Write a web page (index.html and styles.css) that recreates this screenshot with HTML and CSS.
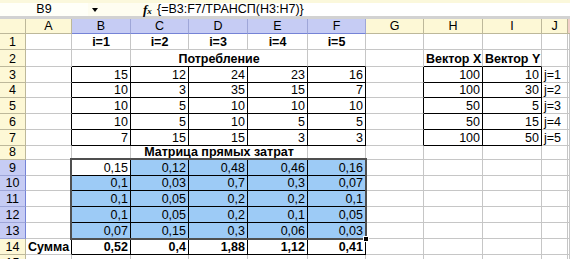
FILE: index.html
```html
<!DOCTYPE html>
<html lang="ru">

<head>
  <meta charset="UTF-8" />
  <title>Матрица прямых затрат</title>
  <link rel="stylesheet" href="styles.css">
</head>

<body>
  <div class="formula-bar">
    <div class="name-box">B9</div>
    <div class="name-arrow"><span></span></div>
    <div class="fx">f<span>x</span></div>
    <div class="formula">{=B3:F7/ТРАНСП(H3:H7)}</div>
  </div>
  <div class="sheet">
    <table class="grid">
      <colgroup>
        <col style="width:26px">
        <col style="width:46px">
        <col style="width:59px">
        <col style="width:58px">
        <col style="width:59px">
        <col style="width:60px">
        <col style="width:58px">
        <col style="width:58px">
        <col style="width:59px">
        <col style="width:59px">
        <col style="width:26px">
        <col style="width:2px">
      </colgroup>
      <thead>
        <tr class="hdr">
          <th class="corner"></th>
          <th>A</th>
          <th class="sel">B</th>
          <th class="sel">C</th>
          <th class="sel">D</th>
          <th class="sel">E</th>
          <th class="sel">F</th>
          <th>G</th>
          <th>H</th>
          <th>I</th>
          <th>J</th>
          <th class="edge"></th>
        </tr>
      </thead>
      <tbody>
        <tr class="h16">
          <td class="rh">1</td>
          <td></td>
          <td class="c b">i=1</td>
          <td class="c b">i=2</td>
          <td class="c b">i=3</td>
          <td class="c b">i=4</td>
          <td class="c b">i=5</td>
          <td></td><td></td><td></td><td></td><td></td>
        </tr>
        <tr class="h17">
          <td class="rh">2</td>
          <td></td>
          <td class="kb"></td>
          <td class="kb c b" colspan="3">Потребление</td>
          <td class="kb"></td>
          <td></td>
          <td class="kb c b">Вектор X</td>
          <td class="kb c b">Вектор Y</td>
          <td></td><td></td>
        </tr>
        <tr class="h16">
          <td class="rh">3</td>
          <td class="kr"></td>
          <td class="k n">15</td><td class="k n">12</td><td class="k n">24</td><td class="k n">23</td><td class="k n">16</td>
          <td class="kr"></td>
          <td class="k n">100</td><td class="k n">10</td>
          <td>j=1</td><td></td>
        </tr>
        <tr class="h15">
          <td class="rh">4</td>
          <td class="kr"></td>
          <td class="k n">10</td><td class="k n">3</td><td class="k n">35</td><td class="k n">15</td><td class="k n">7</td>
          <td class="kr"></td>
          <td class="k n">100</td><td class="k n">30</td>
          <td>j=2</td><td></td>
        </tr>
        <tr class="h16">
          <td class="rh">5</td>
          <td class="kr"></td>
          <td class="k n">10</td><td class="k n">5</td><td class="k n">10</td><td class="k n">10</td><td class="k n">10</td>
          <td class="kr"></td>
          <td class="k n">50</td><td class="k n">5</td>
          <td>j=3</td><td></td>
        </tr>
        <tr class="h16">
          <td class="rh">6</td>
          <td class="kr"></td>
          <td class="k n">10</td><td class="k n">5</td><td class="k n">10</td><td class="k n">5</td><td class="k n">5</td>
          <td class="kr"></td>
          <td class="k n">50</td><td class="k n">15</td>
          <td>j=4</td><td></td>
        </tr>
        <tr class="h16">
          <td class="rh">7</td>
          <td class="kr"></td>
          <td class="k n">7</td><td class="k n">15</td><td class="k n">15</td><td class="k n">3</td><td class="k n">3</td>
          <td class="kr"></td>
          <td class="k n">100</td><td class="k n">50</td>
          <td>j=5</td><td></td>
        </tr>
        <tr class="h14">
          <td class="rh">8</td>
          <td></td>
          <td class="kb"></td>
          <td class="kb c b" colspan="3">Матрица прямых затрат</td>
          <td class="kb"></td>
          <td></td><td></td><td></td><td></td><td></td>
        </tr>
        <tr class="h16">
          <td class="rh sel">9</td>
          <td class="kr"></td>
          <td class="k n">0,15</td><td class="k n blue">0,12</td><td class="k n blue">0,48</td><td class="k n blue">0,46</td><td class="k n blue">0,16</td>
          <td></td><td></td><td></td><td></td><td></td>
        </tr>
        <tr class="h15">
          <td class="rh sel">10</td>
          <td class="kr"></td>
          <td class="k n blue">0,1</td><td class="k n blue">0,03</td><td class="k n blue">0,7</td><td class="k n blue">0,3</td><td class="k n blue">0,07</td>
          <td></td><td></td><td></td><td></td><td></td>
        </tr>
        <tr class="h16">
          <td class="rh sel">11</td>
          <td class="kr"></td>
          <td class="k n blue">0,1</td><td class="k n blue">0,05</td><td class="k n blue">0,2</td><td class="k n blue">0,2</td><td class="k n blue">0,1</td>
          <td></td><td></td><td></td><td></td><td></td>
        </tr>
        <tr class="h16">
          <td class="rh sel">12</td>
          <td class="kr"></td>
          <td class="k n blue">0,1</td><td class="k n blue">0,05</td><td class="k n blue">0,2</td><td class="k n blue">0,1</td><td class="k n blue">0,05</td>
          <td></td><td></td><td></td><td></td><td></td>
        </tr>
        <tr class="h16">
          <td class="rh sel">13</td>
          <td class="kr"></td>
          <td class="k n blue">0,07</td><td class="k n blue">0,15</td><td class="k n blue">0,3</td><td class="k n blue">0,06</td><td class="k n blue">0,03</td>
          <td></td><td></td><td></td><td></td><td></td>
        </tr>
        <tr class="h16">
          <td class="rh">14</td>
          <td class="kr b">Сумма</td>
          <td class="k n b">0,52</td><td class="k n b">0,4</td><td class="k n b">1,88</td><td class="k n b">1,12</td><td class="k n b">0,41</td>
          <td></td><td></td><td></td><td></td><td></td>
        </tr>
        <tr class="h16">
          <td class="rh">15</td>
          <td></td><td></td><td></td><td></td><td></td><td></td><td></td><td></td><td></td><td></td><td></td>
        </tr>
      </tbody>
    </table>
    <div class="selection"><span class="handle"></span></div>
  </div>
</body>

</html>
```

FILE: styles.css
```css
:root {
  --grid-line: #c6c6c6;
  --hdr-yellow: #fdf8d6;
  --hdr-line: #bdb89a;
  --hdr-sel: #c6ccf4;
  --hdr-sel-line: #7583d6;
  --cell-blue: #9dcbf6;
}

* {
  margin: 0;
  padding: 0;
  box-sizing: border-box;
}

body {
  width: 570px;
  height: 259px;
  overflow: hidden;
  background: #fff;
  color: #000;
  font-family: "Liberation Sans", Arial, sans-serif;
  font-size: 12.5px;
}

/* formula bar */
.formula-bar {
  display: flex;
  align-items: stretch;
  height: 19px;
  background: #fefdf0;
  border-bottom: 3px solid #d2d2d2;
  border-top: 3px solid #fbf8dc;
}

.name-box {
  width: 88px;
  text-align: center;
  line-height: 13px;
  background: #fffff8;
}

.name-arrow {
  width: 14px;
  display: flex;
  align-items: center;
  justify-content: center;
}

.name-arrow span {
  width: 0;
  height: 0;
  border-left: 3px solid transparent;
  border-right: 3px solid transparent;
  border-top: 4px solid #000;
}

.fx {
  margin-left: 41px;
  width: 14px;
  font-family: "Liberation Serif", serif;
  font-style: italic;
  font-weight: bold;
  font-size: 13px;
  line-height: 13px;
}

.fx span {
  font-size: 9px;
}

.formula {
  flex: 1;
  line-height: 13px;
  background: #fff;
}

/* sheet */
.sheet {
  position: relative;
}

.grid {
  border-collapse: separate;
  border-spacing: 0;
  table-layout: fixed;
  width: 570px;
}

.grid th,
.grid td {
  border-right: 1px solid var(--grid-line);
  border-bottom: 1px solid var(--grid-line);
  padding: 0 2px;
  line-height: 13px;
  vertical-align: bottom;
  white-space: nowrap;
  overflow: hidden;
  font-weight: normal;
  text-align: left;
}

.hdr {
  height: 15px;
}

.hdr th {
  text-align: center;
  background: var(--hdr-yellow);
  border-right-color: var(--hdr-line);
  border-bottom-color: var(--hdr-line);
}

.hdr th.sel {
  background: var(--hdr-sel);
  border-bottom-color: var(--hdr-sel-line);
  border-right-color: #9ea6d8;
}

.hdr th.edge {
  background: #f2cfc8;
  border-right: none;
}

.grid td.rh {
  text-align: center;
  background: var(--hdr-yellow);
  border-right-color: var(--hdr-line);
  border-bottom-color: var(--hdr-line);
}

.grid td.rh.sel {
  background: var(--hdr-sel);
  border-right-color: var(--hdr-sel-line);
  border-bottom-color: #9ea6d8;
}

.h14 { height: 14px; }
.h15 { height: 15px; }
.h16 { height: 16px; }
.h17 { height: 17px; }

.grid td.b { font-weight: bold; }
.grid td.c { text-align: center; }
.grid td.n { text-align: right; }

.grid td.k {
  border-right-color: #000;
  border-bottom-color: #000;
}

.grid td.kr {
  border-right-color: #000;
}

.grid td.kb {
  border-bottom-color: #000;
}

.grid td.blue {
  background: var(--cell-blue);
}

/* active range outline */
.selection {
  position: absolute;
  left: 70px;
  top: 139px;
  width: 297px;
  height: 82px;
  border: 2px solid #4f4f4f;
  pointer-events: none;
}

.handle {
  position: absolute;
  right: -4px;
  bottom: -4px;
  width: 6px;
  height: 6px;
  background: #000;
  border: 1px solid #fff;
}
```
